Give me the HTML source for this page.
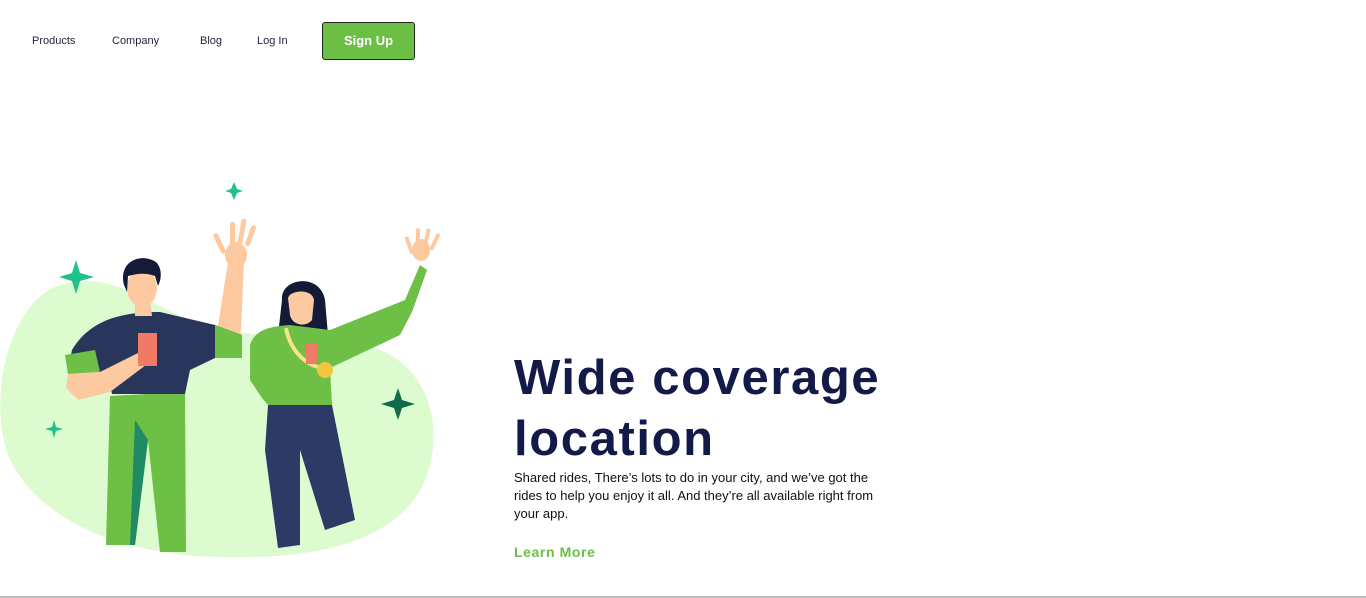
<!DOCTYPE html>
<html><head><meta charset="utf-8"><style>
*{margin:0;padding:0;box-sizing:border-box}
body{width:1366px;height:598px;background:#fff;font-family:"Liberation Sans",sans-serif;position:relative;overflow:hidden}
.nav a{position:absolute;top:35px;font-size:11px;color:#1e2235;text-decoration:none}
.btn{position:absolute;left:322px;top:22px;width:93px;height:38px;background:#6cbf45;border:1px solid #1d2a17;border-radius:3px;color:#fff;font-weight:bold;font-size:13px;text-align:center;line-height:36px}
h1{position:absolute;left:514px;top:348px;font-size:49px;line-height:61px;color:#141a48;font-weight:bold;letter-spacing:1.6px}
p{position:absolute;left:514px;top:469px;width:372px;font-size:13px;line-height:18px;color:#111}
.lm{position:absolute;left:514px;top:544px;font-size:14px;color:#6cbf45;letter-spacing:.6px;font-weight:bold}
.line{position:absolute;left:0;top:596px;width:1366px;height:2px;background:#bbb}
</style></head><body>
<div class="nav"><a style="left:32px">Products</a><a style="left:112px">Company</a><a style="left:200px">Blog</a><a style="left:257px">Log In</a></div>
<div class="btn">Sign Up</div>
<svg style="position:absolute;left:0;top:0" width="450" height="598" viewBox="0 0 450 598">
<path d="M60 285 C110 270 140 300 190 320 C260 345 330 330 380 350 C430 370 445 430 425 480 C400 540 320 560 220 557 C120 555 40 520 10 460 C-15 400 10 300 60 285Z" fill="#dcfcd0"/>
<g fill="#1fc28a"><path d="M234 182 L237 189 L243 191 L237 193 L234 200 L231 193 L225 191 L231 189Z"/>
<path d="M76 260 L80 273 L94 277 L80 281 L76 294 L72 281 L59 277 L72 273Z"/>
<path d="M54 420 L56 427 L63 429 L56 431 L54 438 L52 431 L45 429 L52 427Z"/></g>
<path d="M398 388 L402 400 L415 404 L402 408 L398 420 L394 408 L381 404 L394 400Z" fill="#0f6b4a"/>
<!-- man -->
<path d="M215 345 L228 262 L244 262 L240 350Z" fill="#fcc9a0"/>
<g fill="#fcc9a0"><ellipse cx="236" cy="255" rx="11" ry="13"/>
<rect x="220" y="232" width="5" height="22" rx="2.5" transform="rotate(-25 222 250)"/>
<rect x="230" y="222" width="5" height="24" rx="2.5"/>
<rect x="238" y="218" width="5" height="26" rx="2.5" transform="rotate(10 240 240)"/>
<rect x="245" y="224" width="5" height="22" rx="2.5" transform="rotate(20 247 244)"/></g>
<path d="M110 396 L185 392 L186 552 L160 552 L148 440 L135 545 L106 545Z" fill="#6dbf45"/>
<path d="M135 420 L148 440 L135 545 L130 545Z" fill="#1f8a64"/>
<path d="M72 350 C90 320 120 312 160 312 L215 325 L242 335 L242 358 L215 358 L190 370 L185 394 L112 394 L108 372 L88 372 L68 370Z" fill="#2a355c"/>
<path d="M215 325 L242 335 L242 358 L215 358Z" fill="#6dbf45"/>
<path d="M65 355 L95 350 L100 372 L68 374Z" fill="#6dbf45"/>
<path d="M68 374 L100 372 L140 352 L150 362 L110 392 L78 400 L66 388Z" fill="#fcc9a0"/>
<rect x="138" y="333" width="19" height="33" fill="#f07b64"/>
<path d="M135 300 L150 300 L152 316 L135 316Z" fill="#fcc9a0"/>
<ellipse cx="142" cy="288" rx="15" ry="19" fill="#fcc9a0"/>
<path d="M124 285 C118 262 140 252 156 262 C162 268 162 278 158 286 L155 276 C145 272 135 274 128 276 L127 292Z" fill="#131b38"/>
<!-- woman -->
<path d="M282 300 C280 278 320 272 325 300 L328 335 L278 335Z" fill="#131b38"/>
<path d="M288 298 C290 290 312 288 314 300 L312 320 C305 328 292 325 290 315Z" fill="#fcc9a0"/>
<path d="M250 345 C255 328 275 326 290 325 L330 330 L405 300 L420 265 L427 270 L412 312 L400 335 L330 368 L332 405 L268 405 L262 398 L250 380Z" fill="#6dbf45"/>
<g fill="#fcc9a0"><ellipse cx="421" cy="250" rx="9" ry="11"/>
<rect x="409" y="236" width="4" height="18" rx="2" transform="rotate(-20 411 250)"/>
<rect x="416" y="228" width="4" height="20" rx="2"/>
<rect x="423" y="228" width="4" height="20" rx="2" transform="rotate(12 425 246)"/>
<rect x="430" y="232" width="4" height="18" rx="2" transform="rotate(25 432 248)"/></g>
<path d="M268 405 L332 405 L355 520 L325 530 L300 450 L300 545 L278 548 L265 450Z" fill="#2d3a66"/>
<path d="M286 328 C290 350 305 365 322 368" stroke="#f3e38a" stroke-width="4" fill="none"/>
<circle cx="325" cy="370" r="8" fill="#f3c640"/>
<rect x="306" y="344" width="12" height="20" fill="#f07b64"/>
</svg>
<h1>Wide coverage<br>location</h1>
<p>Shared rides, There’s lots to do in your city, and we’ve got the rides to help you enjoy it all. And they’re all available right from your app.</p>
<div class="lm">Learn More</div>
<div class="line"></div>
</body></html>
